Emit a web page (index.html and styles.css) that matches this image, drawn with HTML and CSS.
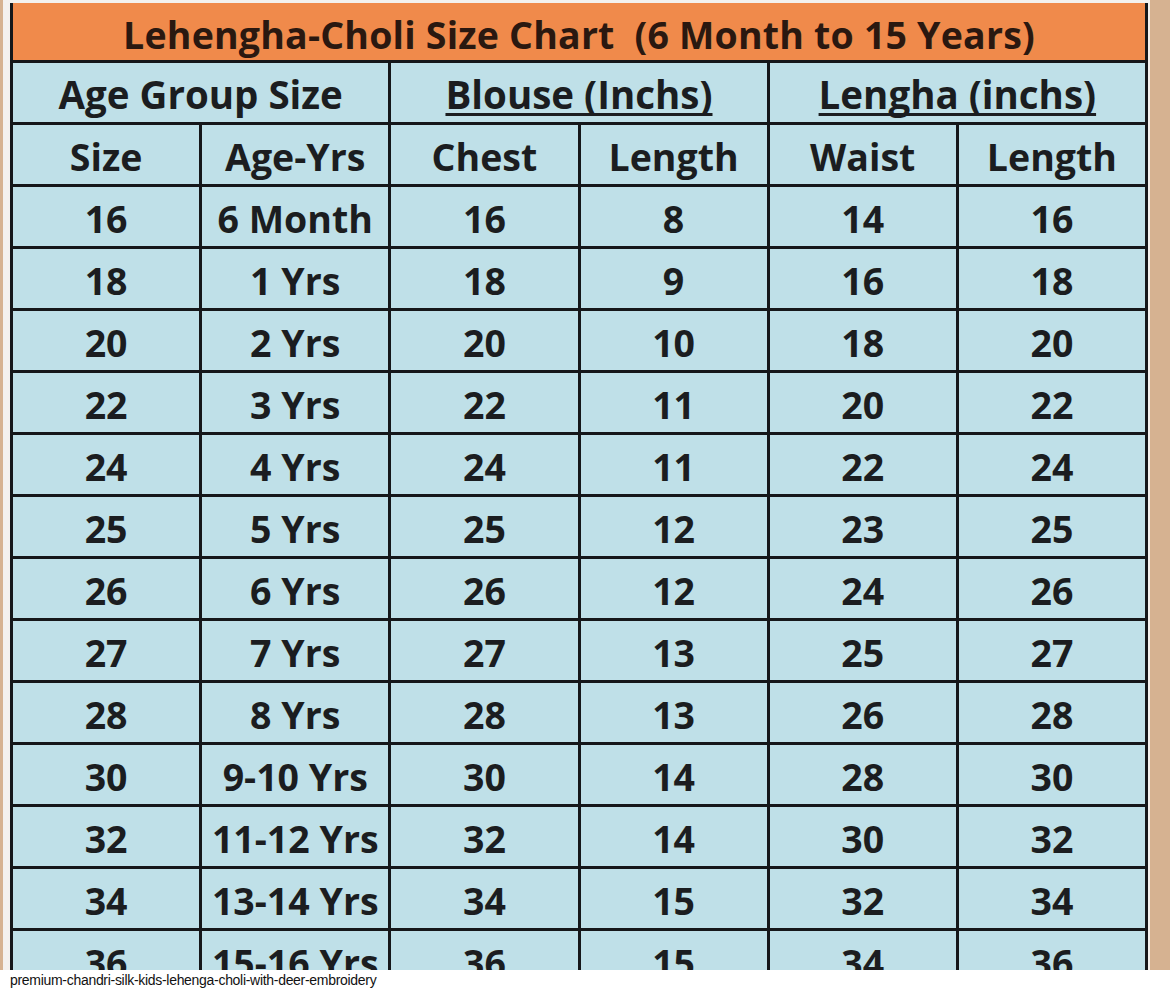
FILE: index.html
```html
<!DOCTYPE html>
<html lang="en">
<head>
<meta charset="utf-8">
<title>premium-chandri-silk-kids-lehenga-choli-with-deer-embroidery</title>
<link rel="stylesheet" href="styles.css">
</head>
<body>
<figure class="figure">
  <div class="photo">
    <div class="frame">
      <div class="chart">
        <div class="cell title">Lehengha-Choli Size Chart&nbsp; (6 Month to 15 Years)</div>
        <div class="cell group">Age Group Size</div>
        <div class="cell group"><u>Blouse (Inchs)</u></div>
        <div class="cell group"><u>Lengha (inchs)</u></div>
        <div class="cell">Size</div><div class="cell">Age-Yrs</div><div class="cell">Chest</div><div class="cell">Length</div><div class="cell">Waist</div><div class="cell">Length</div>
        <div class="cell">16</div><div class="cell">6 Month</div><div class="cell">16</div><div class="cell">8</div><div class="cell">14</div><div class="cell">16</div>
        <div class="cell">18</div><div class="cell">1 Yrs</div><div class="cell">18</div><div class="cell">9</div><div class="cell">16</div><div class="cell">18</div>
        <div class="cell">20</div><div class="cell">2 Yrs</div><div class="cell">20</div><div class="cell">10</div><div class="cell">18</div><div class="cell">20</div>
        <div class="cell">22</div><div class="cell">3 Yrs</div><div class="cell">22</div><div class="cell">11</div><div class="cell">20</div><div class="cell">22</div>
        <div class="cell">24</div><div class="cell">4 Yrs</div><div class="cell">24</div><div class="cell">11</div><div class="cell">22</div><div class="cell">24</div>
        <div class="cell">25</div><div class="cell">5 Yrs</div><div class="cell">25</div><div class="cell">12</div><div class="cell">23</div><div class="cell">25</div>
        <div class="cell">26</div><div class="cell">6 Yrs</div><div class="cell">26</div><div class="cell">12</div><div class="cell">24</div><div class="cell">26</div>
        <div class="cell">27</div><div class="cell">7 Yrs</div><div class="cell">27</div><div class="cell">13</div><div class="cell">25</div><div class="cell">27</div>
        <div class="cell">28</div><div class="cell">8 Yrs</div><div class="cell">28</div><div class="cell">13</div><div class="cell">26</div><div class="cell">28</div>
        <div class="cell">30</div><div class="cell">9-10 Yrs</div><div class="cell">30</div><div class="cell">14</div><div class="cell">28</div><div class="cell">30</div>
        <div class="cell">32</div><div class="cell">11-12 Yrs</div><div class="cell">32</div><div class="cell">14</div><div class="cell">30</div><div class="cell">32</div>
        <div class="cell">34</div><div class="cell">13-14 Yrs</div><div class="cell">34</div><div class="cell">15</div><div class="cell">32</div><div class="cell">34</div>
        <div class="cell">36</div><div class="cell">15-16 Yrs</div><div class="cell">36</div><div class="cell">15</div><div class="cell">34</div><div class="cell">36</div>
      </div>
    </div>
  </div>
  <figcaption class="caption">premium-chandri-silk-kids-lehenga-choli-with-deer-embroidery</figcaption>
</figure>
</body>
</html>
```
FILE: styles.css
```css
html, body {
  margin: 0;
  padding: 0;
  background: #ffffff;
}
.figure {
  margin: 0;
  width: 1170px;
}
.photo {
  height: 970px;
  overflow: hidden;
  background: #d6b291;
  padding: 0 20px 0 3px;
  box-sizing: border-box;
}
.frame {
  height: 100%;
  background: #f4f1ee;
  padding: 3px 2px 0 7px;
  box-sizing: border-box;
}
.chart {
  display: grid;
  grid-template-columns: repeat(6, 1fr);
  grid-auto-rows: 59px;
  grid-template-rows: 57px;
  gap: 3px;
  background: #15171a;
  padding: 0 3px;
  font-family: "Open Sans", Lato, sans-serif;
  font-weight: 700;
  color: #1b1d20;
}
.cell {
  background: #bfe0e8;
  display: flex;
  align-items: center;
  justify-content: center;
  font-size: 37.5px;
  padding-top: 3px;
  box-sizing: border-box;
  white-space: nowrap;
  letter-spacing: 0;
}
.title {
  grid-column: span 6;
  background: #f08a4b;
  font-size: 37.5px;
  padding-top: 5px;
  color: #2a1810;
  letter-spacing: 0.2px;
}
.group {
  grid-column: span 2;
  font-size: 38.5px;
}
.group u {
  text-decoration-thickness: 3px;
  text-underline-offset: 4px;
  text-decoration-skip-ink: none;
}
.caption {
  font-family: "Liberation Sans", Arial, sans-serif;
  font-size: 14px;
  color: #111;
  padding: 3px 0 0 10px;
  line-height: 15px;
  letter-spacing: -0.3px;
}
```
